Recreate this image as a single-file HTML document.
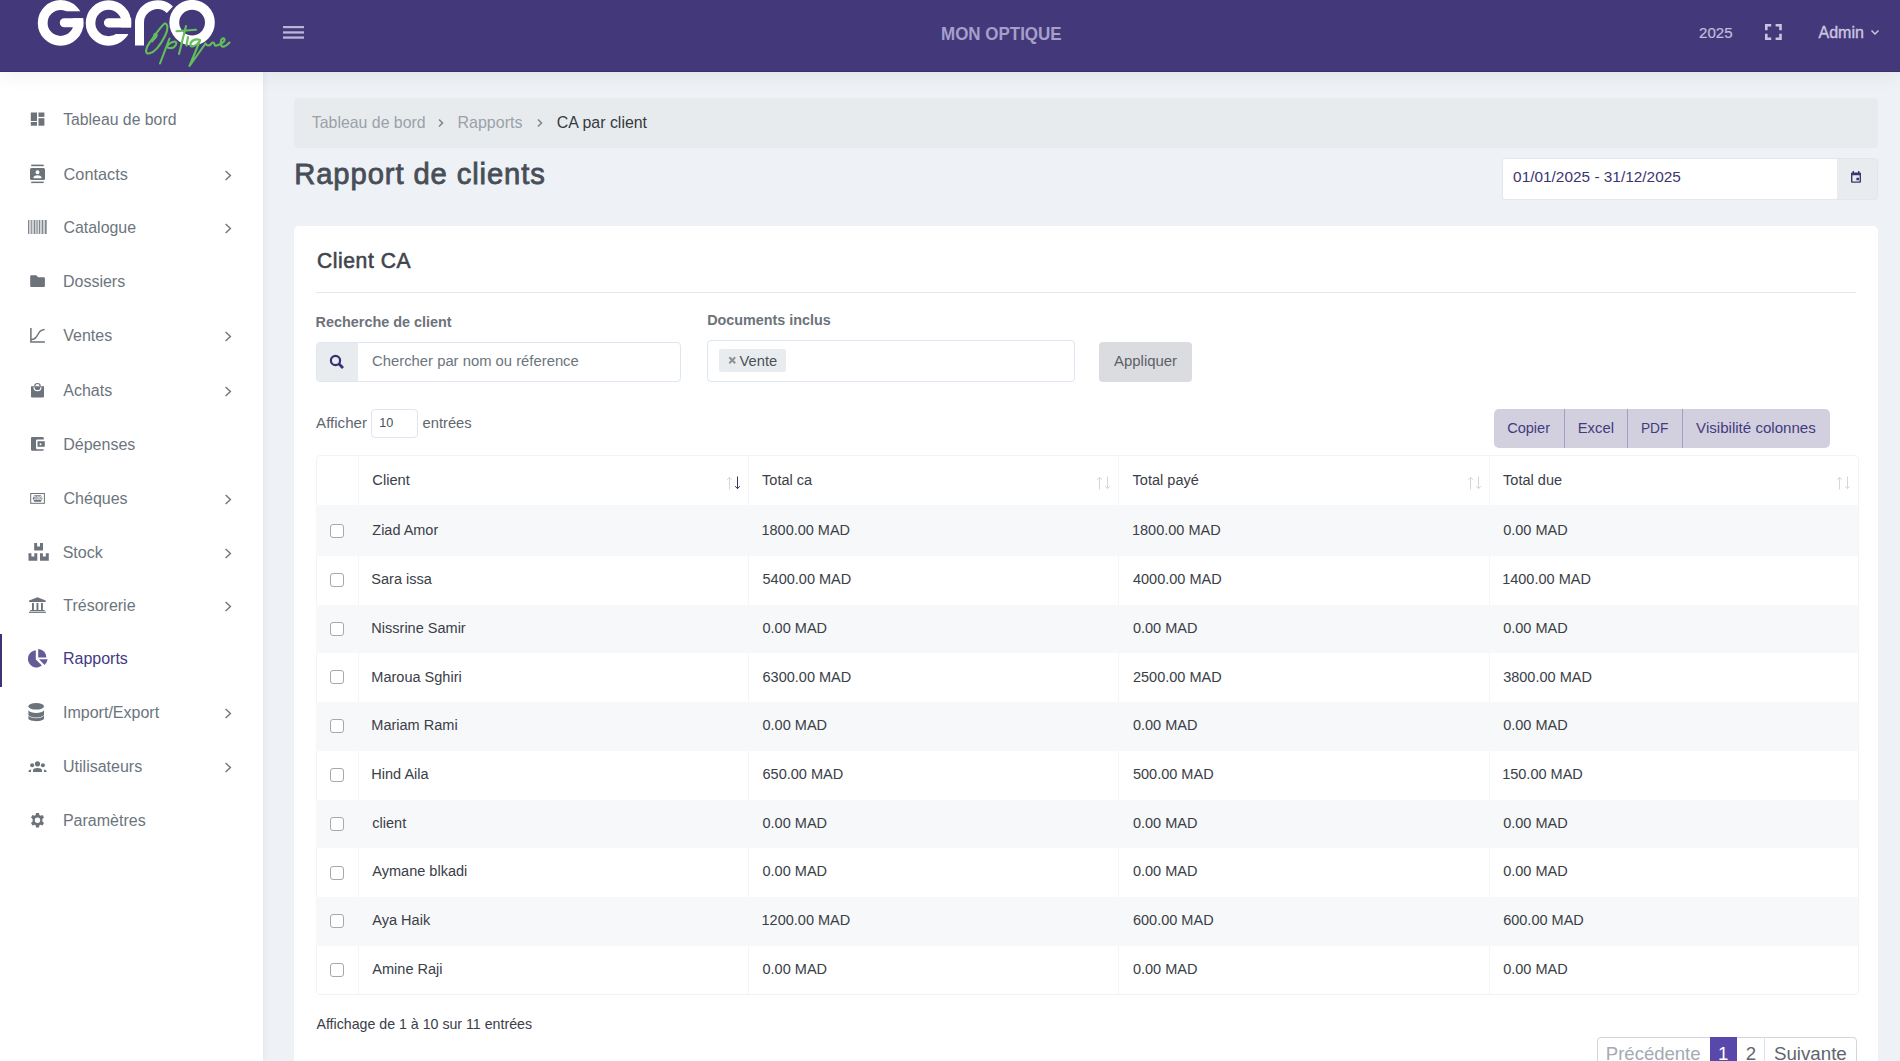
<!DOCTYPE html>
<html><head><meta charset="utf-8"><style>
html,body{margin:0;padding:0}
body{width:1900px;height:1061px;overflow:hidden;position:relative;background:#eef1f5;font-family:"Liberation Sans",sans-serif}
.t{position:absolute;white-space:nowrap;line-height:1;z-index:5}
svg{z-index:4}
</style></head><body>
<div style="position:absolute;left:0;top:0;width:1900px;height:72px;background:#43397a;box-shadow:0 3px 18px rgba(40,40,60,.07);z-index:3"></div>
<div style="position:absolute;left:0;top:71px;width:1900px;height:1px;background:#3a2f6c;z-index:3"></div>
<div style="position:absolute;left:0;top:72px;width:263px;height:989px;background:#fff;box-shadow:1px 0 6px rgba(0,0,0,.06);z-index:2"></div>
<div style="position:absolute;left:0;top:634px;width:2px;height:53px;background:#3d3274;z-index:4"></div>
<div style="position:absolute;left:294px;top:98px;width:1584px;height:50px;background:#e8ebee;border-radius:4px"></div>
<div style="position:absolute;left:1502px;top:157.5px;width:375.5px;height:42px;background:#e9ecef;border:1px solid #e3e7ec;border-radius:4px;box-sizing:border-box"></div>
<div style="position:absolute;left:1503px;top:158.5px;width:333.5px;height:40px;background:#fff;border-radius:3px 0 0 3px"></div>
<div style="position:absolute;left:294px;top:226px;width:1584px;height:900px;background:#fff;border-radius:5px"></div>
<div style="position:absolute;left:316px;top:292px;width:1540px;height:1px;background:#e6e9ec"></div>
<div style="position:absolute;left:316px;top:342px;width:365px;height:40px;background:#fff;border:1px solid #dde6f1;border-radius:4px;box-sizing:border-box"></div>
<div style="position:absolute;left:317px;top:343px;width:41px;height:38px;background:#e9ecef;border-radius:3px 0 0 3px"></div>
<div style="position:absolute;left:707px;top:340px;width:368px;height:42px;background:#fff;border:1px solid #dde6f1;border-radius:4px;box-sizing:border-box"></div>
<div style="position:absolute;left:719px;top:349px;width:67px;height:23px;background:#e9ecef;border-radius:2px"></div>
<div style="position:absolute;left:1099px;top:342px;width:93px;height:40px;background:#dbdcdf;border-radius:4px"></div>
<div style="position:absolute;left:371px;top:409px;width:47px;height:29px;background:#fff;border:1px solid #dde6f1;border-radius:4px;box-sizing:border-box"></div>
<div style="position:absolute;left:1494px;top:409px;width:336px;height:39px;background:#d2cfdf;border-radius:5px"></div>
<div style="position:absolute;left:1564px;top:409px;width:1px;height:39px;background:#a29cc6"></div>
<div style="position:absolute;left:1627px;top:409px;width:1px;height:39px;background:#a29cc6"></div>
<div style="position:absolute;left:1682px;top:409px;width:1px;height:39px;background:#a29cc6"></div>
<div style="position:absolute;left:316px;top:455px;width:1543px;height:539.9px;border:1px solid #f2f3f5;border-radius:4px;box-sizing:border-box"></div>
<div style="position:absolute;left:316px;top:505.0px;width:1542px;height:50.7px;background:#f7f8fa"></div>
<div style="position:absolute;left:316px;top:604.5px;width:1542px;height:48.8px;background:#f7f8fa"></div>
<div style="position:absolute;left:316px;top:702.1px;width:1542px;height:48.8px;background:#f7f8fa"></div>
<div style="position:absolute;left:316px;top:799.7px;width:1542px;height:48.8px;background:#f7f8fa"></div>
<div style="position:absolute;left:316px;top:897.3px;width:1542px;height:48.8px;background:#f7f8fa"></div>
<div style="position:absolute;left:358px;top:456px;width:1px;height:538px;background:#f4f5f7;z-index:0"></div>
<div style="position:absolute;left:748px;top:456px;width:1px;height:538px;background:#f4f5f7;z-index:0"></div>
<div style="position:absolute;left:1118px;top:456px;width:1px;height:538px;background:#f4f5f7;z-index:0"></div>
<div style="position:absolute;left:1489px;top:456px;width:1px;height:538px;background:#f4f5f7;z-index:0"></div>
<div style="position:absolute;left:317px;top:505.0px;width:1540px;height:50.7px;background:#f7f8fa"></div>
<div style="position:absolute;left:317px;top:604.5px;width:1540px;height:48.8px;background:#f7f8fa"></div>
<div style="position:absolute;left:317px;top:702.1px;width:1540px;height:48.8px;background:#f7f8fa"></div>
<div style="position:absolute;left:317px;top:799.7px;width:1540px;height:48.8px;background:#f7f8fa"></div>
<div style="position:absolute;left:317px;top:897.3px;width:1540px;height:48.8px;background:#f7f8fa"></div>
<div style="position:absolute;left:330px;top:524px;width:13.5px;height:13.5px;border:1px solid #a8a8a8;border-radius:3px;box-sizing:border-box;background:#fff"></div>
<div style="position:absolute;left:330px;top:573px;width:13.5px;height:13.5px;border:1px solid #a8a8a8;border-radius:3px;box-sizing:border-box;background:#fff"></div>
<div style="position:absolute;left:330px;top:622px;width:13.5px;height:13.5px;border:1px solid #a8a8a8;border-radius:3px;box-sizing:border-box;background:#fff"></div>
<div style="position:absolute;left:330px;top:670px;width:13.5px;height:13.5px;border:1px solid #a8a8a8;border-radius:3px;box-sizing:border-box;background:#fff"></div>
<div style="position:absolute;left:330px;top:719px;width:13.5px;height:13.5px;border:1px solid #a8a8a8;border-radius:3px;box-sizing:border-box;background:#fff"></div>
<div style="position:absolute;left:330px;top:768px;width:13.5px;height:13.5px;border:1px solid #a8a8a8;border-radius:3px;box-sizing:border-box;background:#fff"></div>
<div style="position:absolute;left:330px;top:817px;width:13.5px;height:13.5px;border:1px solid #a8a8a8;border-radius:3px;box-sizing:border-box;background:#fff"></div>
<div style="position:absolute;left:330px;top:866px;width:13.5px;height:13.5px;border:1px solid #a8a8a8;border-radius:3px;box-sizing:border-box;background:#fff"></div>
<div style="position:absolute;left:330px;top:914px;width:13.5px;height:13.5px;border:1px solid #a8a8a8;border-radius:3px;box-sizing:border-box;background:#fff"></div>
<div style="position:absolute;left:330px;top:963px;width:13.5px;height:13.5px;border:1px solid #a8a8a8;border-radius:3px;box-sizing:border-box;background:#fff"></div>
<svg style="position:absolute;left:727px;top:476px;" width="14" height="14" viewBox="0 0 14 14"><g fill="none" stroke-width="1"><path d="M2.5 13.5V1.5M0.2 3.8L2.5 1.3L4.8 3.8" stroke="#d6d6d6"/><path d="M10.5 0.5V12.5M8.2 10.2L10.5 12.7L12.8 10.2" stroke="#353a55"/></g></svg>
<svg style="position:absolute;left:1097px;top:476px;" width="14" height="14" viewBox="0 0 14 14"><g fill="none" stroke-width="1"><path d="M2.5 13.5V1.5M0.2 3.8L2.5 1.3L4.8 3.8" stroke="#d6d6d6"/><path d="M10.5 0.5V12.5M8.2 10.2L10.5 12.7L12.8 10.2" stroke="#d6d6d6"/></g></svg>
<svg style="position:absolute;left:1468px;top:476px;" width="14" height="14" viewBox="0 0 14 14"><g fill="none" stroke-width="1"><path d="M2.5 13.5V1.5M0.2 3.8L2.5 1.3L4.8 3.8" stroke="#d6d6d6"/><path d="M10.5 0.5V12.5M8.2 10.2L10.5 12.7L12.8 10.2" stroke="#d6d6d6"/></g></svg>
<svg style="position:absolute;left:1837px;top:476px;" width="14" height="14" viewBox="0 0 14 14"><g fill="none" stroke-width="1"><path d="M2.5 13.5V1.5M0.2 3.8L2.5 1.3L4.8 3.8" stroke="#d6d6d6"/><path d="M10.5 0.5V12.5M8.2 10.2L10.5 12.7L12.8 10.2" stroke="#d6d6d6"/></g></svg>
<div style="position:absolute;left:1596.5px;top:1037px;width:260px;height:40px;background:#fff;border:1px solid #cfd6de;border-radius:4px;box-sizing:border-box"></div>
<div style="position:absolute;left:1710px;top:1037px;width:27px;height:40px;background:#5848ac"></div>
<div style="position:absolute;left:1764px;top:1037px;width:1px;height:40px;background:#dee2e6"></div>
<svg style="position:absolute;left:0;top:0" width="263" height="72" viewBox="0 0 263 72">
<g fill="none" stroke="#ffffff">
<circle cx="60.6" cy="22.9" r="17.9" stroke-width="9.8"/>
<circle cx="108.5" cy="23" r="17.95" stroke-width="9.6"/>
<circle cx="192.1" cy="22.6" r="17.8" stroke-width="9.8"/>
<path d="M139.5 45.5V22.8A18 18 0 0 1 169.9 9.7" stroke-width="9"/>
</g>
<g fill="#43397a">
<rect x="66" y="11.3" width="19" height="6.9"/>
<rect x="114" y="27.4" width="19" height="6.6"/>
</g>
<g fill="#ffffff">
<path d="M64.3 18.2H83.4V27.3H64.3A4.55 4.55 0 0 1 64.3 18.2Z"/>
<path d="M108.5 18.2H131.2V27.4H108.5A4.6 4.6 0 0 1 108.5 18.2Z"/>
</g>
<g transform="translate(140 18) scale(0.05)" fill="none" stroke="#64be5a" stroke-width="42" stroke-linecap="round" stroke-linejoin="round">
<path d="M490 110C570 100 560 250 500 360C420 520 300 690 180 710C90 720 110 600 200 480C280 370 400 190 490 110"/>
<path d="M300 380C250 330 330 290 335 340C340 390 270 420 240 470"/>
<path d="M400 910L590 410"/>
<path d="M545 560C620 450 760 450 720 530C690 590 620 610 560 595"/>
<path d="M920 160L780 720"/>
<path d="M730 265L1120 235"/>
<path d="M960 380L930 550"/>
<path d="M1200 440C1100 400 990 470 1010 550C1030 600 1150 540 1200 450L990 960L1310 510"/>
<path d="M1310 510C1330 560 1390 560 1420 520C1440 490 1460 480 1480 500C1490 540 1500 570 1560 540"/>
<path d="M1560 540C1650 520 1720 440 1680 410C1630 390 1590 480 1630 560C1670 600 1740 540 1790 490"/>
</g>
</svg>
<svg style="position:absolute;left:283px;top:25px;" width="21" height="15" viewBox="0 0 21 15"><g fill="#bcb4d8"><rect x="0" y="1" width="21" height="2.2"/><rect x="0" y="6.3" width="21" height="2.3"/><rect x="0" y="11.4" width="21" height="2.3"/></g></svg>
<svg style="position:absolute;left:1765px;top:24px;" width="17" height="16" viewBox="0 0 17 16"><g fill="none" stroke="#cac4df" stroke-width="2.6"><path d="M1.3 6.2V1.3H6.2M10.6 1.3H15.5V6.2M15.5 9.8V14.7H10.6M6.2 14.7H1.3V9.8"/></g></svg>
<svg style="position:absolute;left:1870px;top:28px;" width="10" height="9" viewBox="0 0 10 9"><path d="M1.5 2.5L5 6L8.5 2.5" fill="none" stroke="#cac4df" stroke-width="1.5"/></svg>
<svg style="position:absolute;left:22px;top:104px;" width="30" height="30" viewBox="0 0 30 30"><g fill="#6c737b"><rect x="8.8" y="8.5" width="6.2" height="8.5"/><rect x="8.8" y="18" width="6.2" height="3.7"/><rect x="16.5" y="8.5" width="5.9" height="4.4"/><rect x="16.5" y="14.2" width="5.9" height="7.5"/></g></svg>
<svg style="position:absolute;left:22px;top:159px;" width="30" height="30" viewBox="0 0 30 30"><g fill="#6c737b"><rect x="9.2" y="5.6" width="12.5" height="1.6"/><rect x="9.2" y="22.6" width="12.5" height="1.5"/><path fill-rule="evenodd" d="M9.5 9H21.5A1.5 1.5 0 0 1 23 10.5V19.5A1.5 1.5 0 0 1 21.5 21H9.5A1.5 1.5 0 0 1 8 19.5V10.5A1.5 1.5 0 0 1 9.5 9ZM15.5 11.2A2 2 0 1 0 15.5 15.2A2 2 0 1 0 15.5 11.2ZM11.5 19.2H19.5V18.3C19.5 16.9 17 16.2 15.5 16.2S11.5 16.9 11.5 18.3Z"/></g></svg>
<svg style="position:absolute;left:22px;top:212px;" width="30" height="30" viewBox="0 0 30 30"><g fill="#6c737b" opacity="0.85"><rect x="6" y="8" width="1.2" height="14"/><rect x="7.8" y="8" width="0.6" height="14"/><rect x="9.2" y="8" width="1.0" height="14"/><rect x="10.8" y="8" width="0.6" height="14"/><rect x="12" y="8" width="1.4" height="14"/><rect x="14" y="8" width="0.6" height="14"/><rect x="15.3" y="8" width="0.8" height="14"/><rect x="16.8" y="8" width="1.4" height="14"/><rect x="18.8" y="8" width="0.6" height="14"/><rect x="20" y="8" width="1.0" height="14"/><rect x="21.6" y="8" width="0.6" height="14"/><rect x="22.8" y="8" width="1.2" height="14"/><rect x="24.3" y="8" width="0.7" height="14"/></g></svg>
<svg style="position:absolute;left:22px;top:265px;" width="30" height="30" viewBox="0 0 30 30"><path fill="#6c737b" d="M9.2 10.2H14.2L16.2 12.2H21.9A1 1 0 0 1 22.9 13.2V20.9A1 1 0 0 1 21.9 21.9H9.2A1 1 0 0 1 8.2 20.9V11.2A1 1 0 0 1 9.2 10.2Z"/></svg>
<svg style="position:absolute;left:22px;top:320px;" width="30" height="30" viewBox="0 0 30 30"><g fill="none" stroke="#6c737b" stroke-width="1.5"><path d="M8.9 7.9V21.9H22.9"/><path d="M9 19.6C13 19.6 14.5 17 16.5 13.5C18.3 10.5 20 9.8 22.6 9.6" /></g></svg>
<svg style="position:absolute;left:22px;top:375px;" width="30" height="30" viewBox="0 0 30 30"><g fill="#6c737b"><path d="M9 11.2H22V21.6A1 1 0 0 1 21 22.6H10A1 1 0 0 1 9 21.6Z"/><path d="M12.2 11.2A3.3 3.3 0 0 1 18.8 11.2H17.6A2.1 2.1 0 0 0 13.4 11.2Z"/></g><path d="M12 12.2A3.5 3.5 0 0 0 19 12.2" fill="none" stroke="#fff" stroke-width="1.2"/></svg>
<svg style="position:absolute;left:22px;top:429px;" width="30" height="30" viewBox="0 0 30 30"><path fill="#6c737b" fill-rule="evenodd" d="M10 8H20.5A1.3 1.3 0 0 1 21.8 9.3V10.6H15.3A1.3 1.3 0 0 0 14 11.9V18.9A1.3 1.3 0 0 0 15.3 20.2H21.8V20.5A1.3 1.3 0 0 1 20.5 21.8H10A1 1 0 0 1 9 20.8V9A1 1 0 0 1 10 8Z"/><path fill="#6c737b" fill-rule="evenodd" d="M15.5 12.2H22.8V17.8H15.5ZM18.5 14.2A1 1 0 1 0 18.5 16.2A1 1 0 1 0 18.5 14.2Z"/></svg>
<svg style="position:absolute;left:22px;top:483px;" width="30" height="30" viewBox="0 0 30 30"><rect x="8.7" y="10.5" width="13.7" height="9.8" fill="none" stroke="#6c737b" stroke-width="1"/><path fill="#6c737b" d="M12.3 12.2H18.9L20.5 15.5L18.9 18.8H12.3L10.8 15.5Z"/><text x="15.6" y="17.4" font-size="5" font-weight="700" text-anchor="middle" fill="#fff" font-family="Liberation Sans">100</text></svg>
<svg style="position:absolute;left:22px;top:537px;" width="30" height="30" viewBox="0 0 30 30"><g fill="#6c737b"><path d="M12.2 6H15.1V9.4H18.0V6H21.0V13.6H12.2Z"/><path d="M6.5 16.2H9.4V19.599999999999998H12.3V16.2H15.3V23.799999999999997H6.5Z"/><path d="M18 16.2H20.9V19.599999999999998H23.8V16.2H26.8V23.799999999999997H18Z"/></g></svg>
<svg style="position:absolute;left:22px;top:590px;" width="30" height="30" viewBox="0 0 30 30"><g fill="#6c737b"><path d="M15.5 7.2L23.7 10.6V11.9H7.1V10.6Z"/><rect x="10" y="13" width="1.9" height="7"/><rect x="14.5" y="13" width="1.9" height="7"/><rect x="19" y="13" width="1.9" height="7"/><rect x="8.2" y="20" width="14.6" height="1.1"/><rect x="7" y="21.7" width="16.9" height="1.2"/></g></svg>
<svg style="position:absolute;left:22px;top:643px;" width="30" height="30" viewBox="0 0 30 30"><g fill="#665b98"><path d="M13.8 7.3V16.5L19.9 22.6A8.6 8.6 0 1 1 13.8 7.3Z"/><path d="M16.2 6V14.5H24.4A8.5 8.5 0 0 0 16.2 6Z"/><path d="M17 16.2H25.6A8.6 8.6 0 0 1 22.6 21.9Z"/></g></svg>
<svg style="position:absolute;left:22px;top:697px;" width="30" height="30" viewBox="0 0 30 30"><g fill="#6c737b"><ellipse cx="14.2" cy="9.3" rx="7.8" ry="3.3"/><path d="M6.4 13.2C7.5 14.9 10.6 15.9 14.2 15.9S20.9 14.9 22 13.2V17.4C22 19 18.5 20.4 14.2 20.4S6.4 19 6.4 17.4Z"/><path d="M6.4 18.6C7.5 20.3 10.6 21.3 14.2 21.3S20.9 20.3 22 18.6V21.6C22 23.1 18.5 24.2 14.2 24.2S6.4 23.1 6.4 21.6Z"/></g></svg>
<svg style="position:absolute;left:22px;top:751px;" width="30" height="30" viewBox="0 0 30 30"><g fill="#6c737b"><circle cx="15.5" cy="12.8" r="2.6"/><circle cx="10.1" cy="14.3" r="2"/><circle cx="20.9" cy="14.3" r="2"/><path d="M11 21V19.2C11 17.8 13 17 15.5 17S20 17.8 20 19.2V21Z"/><path d="M6.5 21V20.2C6.5 19.2 7.6 18.6 9.3 18.4C9 18.9 9 19.4 9 20V21Z"/><path d="M24.5 21V20.2C24.5 19.2 23.4 18.6 21.7 18.4C22 18.9 22 19.4 22 20V21Z"/></g></svg>
<svg style="position:absolute;left:22px;top:805px;" width="30" height="30" viewBox="0 0 30 30"><path fill="#6c737b" fill-rule="evenodd" d="M14 8H17L17.4 10.1L18.4 10.7L20.5 10L22 12.5L20.4 14V16.4L22 17.9L20.5 20.4L18.4 19.7L17.4 20.3L17 22.6H14L13.6 20.3L12.6 19.7L10.5 20.4L9 17.9L10.6 16.4V14L9 12.5L10.5 10L12.6 10.7L13.6 10.1ZM15.5 12.5A2.7 2.7 0 1 0 15.5 17.9A2.7 2.7 0 1 0 15.5 12.5Z"/></svg>
<svg style="position:absolute;left:222px;top:168px;" width="12" height="14" viewBox="0 0 12 14"><path d="M3.6 3.0L8.4 7.5L3.6 12.0" fill="none" stroke="#6c757d" stroke-width="1.4"/></svg>
<svg style="position:absolute;left:222px;top:221px;" width="12" height="14" viewBox="0 0 12 14"><path d="M3.6 3.0L8.4 7.5L3.6 12.0" fill="none" stroke="#6c757d" stroke-width="1.4"/></svg>
<svg style="position:absolute;left:222px;top:329px;" width="12" height="14" viewBox="0 0 12 14"><path d="M3.6 3.0L8.4 7.5L3.6 12.0" fill="none" stroke="#6c757d" stroke-width="1.4"/></svg>
<svg style="position:absolute;left:222px;top:384px;" width="12" height="14" viewBox="0 0 12 14"><path d="M3.6 3.0L8.4 7.5L3.6 12.0" fill="none" stroke="#6c757d" stroke-width="1.4"/></svg>
<svg style="position:absolute;left:222px;top:492px;" width="12" height="14" viewBox="0 0 12 14"><path d="M3.6 3.0L8.4 7.5L3.6 12.0" fill="none" stroke="#6c757d" stroke-width="1.4"/></svg>
<svg style="position:absolute;left:222px;top:546px;" width="12" height="14" viewBox="0 0 12 14"><path d="M3.6 3.0L8.4 7.5L3.6 12.0" fill="none" stroke="#6c757d" stroke-width="1.4"/></svg>
<svg style="position:absolute;left:222px;top:599px;" width="12" height="14" viewBox="0 0 12 14"><path d="M3.6 3.0L8.4 7.5L3.6 12.0" fill="none" stroke="#6c757d" stroke-width="1.4"/></svg>
<svg style="position:absolute;left:222px;top:706px;" width="12" height="14" viewBox="0 0 12 14"><path d="M3.6 3.0L8.4 7.5L3.6 12.0" fill="none" stroke="#6c757d" stroke-width="1.4"/></svg>
<svg style="position:absolute;left:222px;top:760px;" width="12" height="14" viewBox="0 0 12 14"><path d="M3.6 3.0L8.4 7.5L3.6 12.0" fill="none" stroke="#6c757d" stroke-width="1.4"/></svg>
<svg style="position:absolute;left:1850px;top:170px;" width="13" height="14" viewBox="0 0 13 14"><path fill="#3d3570" fill-rule="evenodd" d="M2.6 1H4V2.5H8V1H9.4V2.5H10A1 1 0 0 1 11 3.5V11.8A1 1 0 0 1 10 12.8H2A1 1 0 0 1 1 11.8V3.5A1 1 0 0 1 2 2.5H2.6ZM2.4 5.2V11.4H9.6V5.2ZM6.4 7.8H9V10.2H6.4Z"/></svg>
<svg style="position:absolute;left:329px;top:354px;" width="16" height="16" viewBox="0 0 16 16"><g fill="none" stroke="#3a2f74" stroke-width="2.2"><circle cx="6.5" cy="6.5" r="4.6"/><path d="M9.6 9.6L14 14" stroke-width="2.8"/></g></svg>
<svg style="position:absolute;left:727px;top:355px;" width="11" height="11" viewBox="0 0 11 11"><path d="M2.3 2.3L8.2 8.2M8.2 2.3L2.3 8.2" stroke="#8c9196" stroke-width="2"/></svg>
<svg style="position:absolute;left:436px;top:117px;" width="10" height="12" viewBox="0 0 10 12"><path d="M3 2.5L6.5 6L3 9.5" fill="none" stroke="#80878e" stroke-width="1.6"/></svg>
<svg style="position:absolute;left:535px;top:117px;" width="10" height="12" viewBox="0 0 10 12"><path d="M3 2.5L6.5 6L3 9.5" fill="none" stroke="#80878e" stroke-width="1.6"/></svg>
<div class="t" id="mon" style="left:941.25px;top:24.20px;font-size:19.200px;color:#a59fc9;font-weight:700;transform:scaleX(0.8839);transform-origin:0 0;">MON OPTIQUE</div>
<div class="t" id="yr" style="left:1699.07px;top:25.21px;font-size:15.057px;color:#c3bddb;font-weight:400;-webkit-text-stroke:0.2px #c3bddb;">2025</div>
<div class="t" id="adm" style="left:1818.54px;top:25.21px;font-size:16.012px;color:#cdc7e1;font-weight:400;-webkit-text-stroke:0.35px #cdc7e1;">Admin</div>
<div class="t" id="s0" style="left:63.15px;top:112.21px;font-size:15.818px;color:#6c757d;font-weight:400;">Tableau de bord</div>
<div class="t" id="s1" style="left:63.55px;top:166.21px;font-size:16.316px;color:#6c757d;font-weight:400;">Contacts</div>
<div class="t" id="s2" style="left:63.55px;top:220.20px;font-size:15.903px;color:#6c757d;font-weight:400;">Catalogue</div>
<div class="t" id="s3" style="left:62.95px;top:274.20px;font-size:16.012px;color:#6c757d;font-weight:400;">Dossiers</div>
<div class="t" id="s4" style="left:63.25px;top:328.20px;font-size:16.012px;color:#6c757d;font-weight:400;">Ventes</div>
<div class="t" id="s5" style="left:63.25px;top:383.20px;font-size:16.012px;color:#6c757d;font-weight:400;">Achats</div>
<div class="t" id="s6" style="left:63.25px;top:437.20px;font-size:16.012px;color:#6c757d;font-weight:400;">Dépenses</div>
<div class="t" id="s7" style="left:63.55px;top:491.20px;font-size:16.012px;color:#6c757d;font-weight:400;">Chéques</div>
<div class="t" id="s8" style="left:62.65px;top:545.20px;font-size:16.012px;color:#6c757d;font-weight:400;">Stock</div>
<div class="t" id="s9" style="left:63.25px;top:598.20px;font-size:16.012px;color:#6c757d;font-weight:400;">Trésorerie</div>
<div class="t" id="s10" style="left:62.95px;top:651.20px;font-size:16.012px;color:#433a85;font-weight:400;">Rapports</div>
<div class="t" id="s11" style="left:63.05px;top:705.20px;font-size:16.012px;color:#6c757d;font-weight:400;">Import/Export</div>
<div class="t" id="s12" style="left:63.05px;top:759.20px;font-size:16.012px;color:#6c757d;font-weight:400;">Utilisateurs</div>
<div class="t" id="s13" style="left:62.95px;top:813.20px;font-size:16.012px;color:#6c757d;font-weight:400;">Paramètres</div>
<div class="t" id="bc1" style="left:311.86px;top:115.21px;font-size:15.870px;color:#9aa1a8;font-weight:400;">Tableau de bord</div>
<div class="t" id="bc2" style="left:457.56px;top:115.22px;font-size:15.991px;color:#9aa1a8;font-weight:400;">Rapports</div>
<div class="t" id="bc3" style="left:556.85px;top:115.21px;font-size:15.911px;color:#343a40;font-weight:400;">CA par client</div>
<div class="t" id="title" style="left:294.25px;top:160.20px;font-size:29.200px;color:#474e57;font-weight:400;transform:scaleX(1.0000);transform-origin:0 0;-webkit-text-stroke:0.8px #474e57;letter-spacing:0.9px;">Rapport de clients</div>
<div class="t" id="date" style="left:1513.08px;top:169.22px;font-size:15.400px;color:#3d3570;font-weight:400;">01/01/2025 - 31/12/2025</div>
<div class="t" id="cca" style="left:316.66px;top:250.20px;font-size:22.400px;color:#3f454d;font-weight:400;transform:scaleX(0.9426);transform-origin:0 0;-webkit-text-stroke:0.6px #3f454d;letter-spacing:0.6px;">Client CA</div>
<div class="t" id="lbl1" style="left:315.54px;top:315.21px;font-size:14.416px;color:#6c737a;font-weight:700;">Recherche de client</div>
<div class="t" id="lbl2" style="left:707.14px;top:313.22px;font-size:14.371px;color:#6c737a;font-weight:700;">Documents inclus</div>
<div class="t" id="ph" style="left:372.11px;top:354.22px;font-size:14.828px;color:#6c757d;font-weight:400;">Chercher par nom ou réference</div>
<div class="t" id="vente" style="left:739.61px;top:354.21px;font-size:14.728px;color:#495057;font-weight:400;">Vente</div>
<div class="t" id="appl" style="left:1114.11px;top:354.20px;font-size:14.900px;color:#5b6168;font-weight:400;">Appliquer</div>
<div class="t" id="aff" style="left:316.09px;top:415.21px;font-size:15.100px;color:#5f666d;font-weight:400;">Afficher</div>
<div class="t" id="ten" style="left:379.30px;top:417.21px;font-size:12.675px;color:#495057;font-weight:400;">10</div>
<div class="t" id="ent" style="left:422.51px;top:416.22px;font-size:14.749px;color:#5f666d;font-weight:400;">entrées</div>
<div class="t" id="b1" style="left:1507.13px;top:421.21px;font-size:14.580px;color:#433b7e;font-weight:400;">Copier</div>
<div class="t" id="b2" style="left:1577.74px;top:421.20px;font-size:14.815px;color:#433b7e;font-weight:400;">Excel</div>
<div class="t" id="b3" style="left:1640.92px;top:421.21px;font-size:14.600px;color:#433b7e;font-weight:400;transform:scaleX(0.9372);transform-origin:0 0;">PDF</div>
<div class="t" id="b4" style="left:1696.10px;top:420.20px;font-size:15.102px;color:#433b7e;font-weight:400;">Visibilité colonnes</div>
<div class="t" id="h1" style="left:372.31px;top:473.22px;font-size:14.663px;color:#3a4047;font-weight:400;">Client</div>
<div class="t" id="h2" style="left:762.11px;top:473.22px;font-size:14.535px;color:#3a4047;font-weight:400;">Total ca</div>
<div class="t" id="h3" style="left:1132.61px;top:473.22px;font-size:14.535px;color:#3a4047;font-weight:400;">Total payé</div>
<div class="t" id="h4" style="left:1503.11px;top:473.22px;font-size:14.535px;color:#3a4047;font-weight:400;">Total due</div>
<div class="t" id="r0c0" style="left:372.33px;top:523.22px;font-size:14.461px;color:#3a4047;font-weight:400;">Ziad Amor</div>
<div class="t" id="r0c1" style="left:761.53px;top:523.21px;font-size:14.480px;color:#3a4047;font-weight:400;">1800.00 MAD</div>
<div class="t" id="r0c2" style="left:1131.93px;top:523.22px;font-size:14.535px;color:#3a4047;font-weight:400;">1800.00 MAD</div>
<div class="t" id="r0c3" style="left:1503.13px;top:523.22px;font-size:14.535px;color:#3a4047;font-weight:400;">0.00 MAD</div>
<div class="t" id="r1c0" style="left:371.33px;top:572.22px;font-size:14.535px;color:#3a4047;font-weight:400;">Sara issa</div>
<div class="t" id="r1c1" style="left:762.53px;top:572.22px;font-size:14.535px;color:#3a4047;font-weight:400;">5400.00 MAD</div>
<div class="t" id="r1c2" style="left:1132.93px;top:572.22px;font-size:14.535px;color:#3a4047;font-weight:400;">4000.00 MAD</div>
<div class="t" id="r1c3" style="left:1502.13px;top:572.22px;font-size:14.535px;color:#3a4047;font-weight:400;">1400.00 MAD</div>
<div class="t" id="r2c0" style="left:371.33px;top:621.22px;font-size:14.535px;color:#3a4047;font-weight:400;">Nissrine Samir</div>
<div class="t" id="r2c1" style="left:762.53px;top:621.22px;font-size:14.535px;color:#3a4047;font-weight:400;">0.00 MAD</div>
<div class="t" id="r2c2" style="left:1132.93px;top:621.22px;font-size:14.535px;color:#3a4047;font-weight:400;">0.00 MAD</div>
<div class="t" id="r2c3" style="left:1503.13px;top:621.22px;font-size:14.535px;color:#3a4047;font-weight:400;">0.00 MAD</div>
<div class="t" id="r3c0" style="left:371.33px;top:670.22px;font-size:14.535px;color:#3a4047;font-weight:400;">Maroua Sghiri</div>
<div class="t" id="r3c1" style="left:762.53px;top:670.22px;font-size:14.535px;color:#3a4047;font-weight:400;">6300.00 MAD</div>
<div class="t" id="r3c2" style="left:1132.93px;top:670.22px;font-size:14.535px;color:#3a4047;font-weight:400;">2500.00 MAD</div>
<div class="t" id="r3c3" style="left:1503.13px;top:670.22px;font-size:14.535px;color:#3a4047;font-weight:400;">3800.00 MAD</div>
<div class="t" id="r4c0" style="left:371.33px;top:718.22px;font-size:14.535px;color:#3a4047;font-weight:400;">Mariam Rami</div>
<div class="t" id="r4c1" style="left:762.53px;top:718.22px;font-size:14.535px;color:#3a4047;font-weight:400;">0.00 MAD</div>
<div class="t" id="r4c2" style="left:1132.93px;top:718.22px;font-size:14.535px;color:#3a4047;font-weight:400;">0.00 MAD</div>
<div class="t" id="r4c3" style="left:1503.13px;top:718.22px;font-size:14.535px;color:#3a4047;font-weight:400;">0.00 MAD</div>
<div class="t" id="r5c0" style="left:371.33px;top:767.22px;font-size:14.535px;color:#3a4047;font-weight:400;">Hind Aila</div>
<div class="t" id="r5c1" style="left:762.53px;top:767.22px;font-size:14.535px;color:#3a4047;font-weight:400;">650.00 MAD</div>
<div class="t" id="r5c2" style="left:1132.93px;top:767.22px;font-size:14.535px;color:#3a4047;font-weight:400;">500.00 MAD</div>
<div class="t" id="r5c3" style="left:1502.13px;top:767.22px;font-size:14.535px;color:#3a4047;font-weight:400;">150.00 MAD</div>
<div class="t" id="r6c0" style="left:372.33px;top:816.22px;font-size:14.535px;color:#3a4047;font-weight:400;">client</div>
<div class="t" id="r6c1" style="left:762.53px;top:816.22px;font-size:14.535px;color:#3a4047;font-weight:400;">0.00 MAD</div>
<div class="t" id="r6c2" style="left:1132.93px;top:816.22px;font-size:14.535px;color:#3a4047;font-weight:400;">0.00 MAD</div>
<div class="t" id="r6c3" style="left:1503.13px;top:816.22px;font-size:14.535px;color:#3a4047;font-weight:400;">0.00 MAD</div>
<div class="t" id="r7c0" style="left:372.33px;top:864.22px;font-size:14.535px;color:#3a4047;font-weight:400;">Aymane blkadi</div>
<div class="t" id="r7c1" style="left:762.53px;top:864.22px;font-size:14.535px;color:#3a4047;font-weight:400;">0.00 MAD</div>
<div class="t" id="r7c2" style="left:1132.93px;top:864.22px;font-size:14.535px;color:#3a4047;font-weight:400;">0.00 MAD</div>
<div class="t" id="r7c3" style="left:1503.13px;top:864.22px;font-size:14.535px;color:#3a4047;font-weight:400;">0.00 MAD</div>
<div class="t" id="r8c0" style="left:372.33px;top:913.22px;font-size:14.535px;color:#3a4047;font-weight:400;">Aya Haik</div>
<div class="t" id="r8c1" style="left:761.53px;top:913.22px;font-size:14.535px;color:#3a4047;font-weight:400;">1200.00 MAD</div>
<div class="t" id="r8c2" style="left:1132.93px;top:913.22px;font-size:14.535px;color:#3a4047;font-weight:400;">600.00 MAD</div>
<div class="t" id="r8c3" style="left:1503.13px;top:913.22px;font-size:14.535px;color:#3a4047;font-weight:400;">600.00 MAD</div>
<div class="t" id="r9c0" style="left:372.33px;top:962.22px;font-size:14.535px;color:#3a4047;font-weight:400;">Amine Raji</div>
<div class="t" id="r9c1" style="left:762.53px;top:962.22px;font-size:14.535px;color:#3a4047;font-weight:400;">0.00 MAD</div>
<div class="t" id="r9c2" style="left:1132.93px;top:962.22px;font-size:14.535px;color:#3a4047;font-weight:400;">0.00 MAD</div>
<div class="t" id="r9c3" style="left:1503.13px;top:962.22px;font-size:14.535px;color:#3a4047;font-weight:400;">0.00 MAD</div>
<div class="t" id="info" style="left:316.44px;top:1017.21px;font-size:14.195px;color:#3a4047;font-weight:400;">Affichage de 1 à 10 sur 11 entrées</div>
<div class="t" id="prev" style="left:1605.81px;top:1045.21px;font-size:18.546px;color:#a3abb3;font-weight:400;">Précédente</div>
<div class="t" id="p1" style="left:1717.91px;top:1045.21px;font-size:18.637px;color:#ffffff;font-weight:400;">1</div>
<div class="t" id="p2" style="left:1745.81px;top:1045.21px;font-size:18.637px;color:#5f666d;font-weight:400;">2</div>
<div class="t" id="next" style="left:1773.91px;top:1045.20px;font-size:18.728px;color:#5f666d;font-weight:400;">Suivante</div>
</body></html>
